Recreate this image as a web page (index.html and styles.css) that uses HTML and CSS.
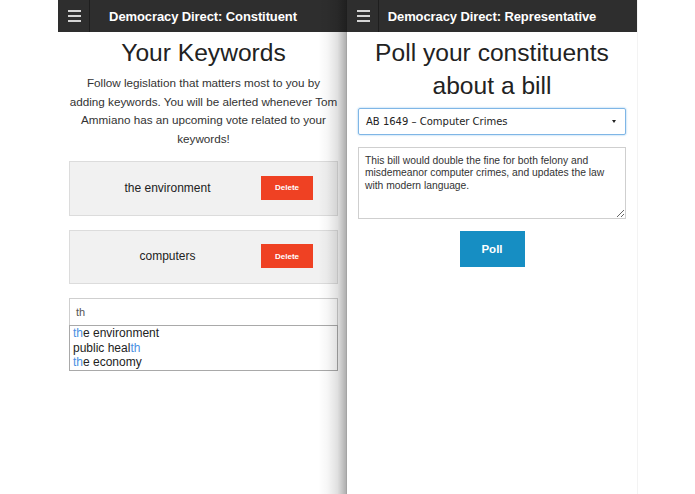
FILE: index.html
```html
<!DOCTYPE html>
<html>
<head>
<meta charset="utf-8">
<link rel="stylesheet" href="styles.css">
</head>
<body>
<div class="stage">
  <section class="panel panel-left">
    <header class="navbar">
      <div class="menu"><span></span><span></span><span></span></div>
      <div class="nav-title">Democracy Direct: Constituent</div>
    </header>
    <div class="content">
      <h1 class="heading">Your Keywords</h1>
      <p class="lead">Follow legislation that matters most to you by<br>adding keywords. You will be alerted whenever Tom<br>Ammiano has an upcoming vote related to your<br>keywords!</p>
      <div class="keyword">
        <span class="keyword-label">the environment</span>
        <button class="btn-delete">Delete</button>
      </div>
      <div class="keyword keyword-2">
        <span class="keyword-label">computers</span>
        <button class="btn-delete">Delete</button>
      </div>
      <div class="search">th</div>
      <ul class="suggest">
        <li><span class="hl">th</span>e environment</li>
        <li>public heal<span class="hl">th</span></li>
        <li><span class="hl">th</span>e economy</li>
      </ul>
    </div>
  </section>
  <section class="panel panel-right">
    <header class="navbar">
      <div class="menu"><span></span><span></span><span></span></div>
      <div class="nav-title">Democracy Direct: Representative</div>
    </header>
    <div class="content">
      <h1 class="heading">Poll your constituents about a bill</h1>
      <div class="select">
        <span>AB 1649 – Computer Crimes</span>
        <span class="caret"></span>
      </div>
      <textarea class="desc" readonly>This bill would double the fine for both felony and misdemeanor computer crimes, and updates the law with modern language.</textarea>
      <div class="actions"><button class="btn-poll">Poll</button></div>
    </div>
  </section>
</div>
</body>
</html>
```

FILE: styles.css
```css
html, body {
  margin: 0;
  padding: 0;
  background: #fff;
  font-family: "Liberation Sans", Arial, Helvetica, sans-serif;
  color: #222;
}

.stage {
  display: flex;
  height: 494px;
  padding-left: 58px;
  overflow: hidden;
}

.panel {
  width: 290px;
  flex: none;
  height: 494px;
  background: #fff;
  display: flex;
  flex-direction: column;
}

.panel-left {
  position: relative;
}

.panel-left::after {
  content: "";
  position: absolute;
  top: 0;
  right: 0;
  width: 30px;
  height: 100%;
  background: linear-gradient(to right,
    rgba(0,0,0,0) 0%,
    rgba(0,0,0,0.03) 30%,
    rgba(0,0,0,0.12) 65%,
    rgba(0,0,0,0.3) 92%,
    rgba(0,0,0,0.45) 100%);
  pointer-events: none;
}

.panel-right {
  margin-left: -1px;
  border-right: 1px solid #f3f3f3;
  position: relative;
  z-index: 1;
}

.navbar {
  height: 32px;
  background: #2e2e2e;
  display: flex;
  align-items: center;
  position: relative;
}

.menu {
  width: 32px;
  height: 32px;
  box-sizing: border-box;
  border-right: 1px solid #1e1e1e;
  display: flex;
  flex-direction: column;
  justify-content: center;
  gap: 3px;
  padding-left: 10px;
}

.menu span {
  display: block;
  width: 13px;
  height: 2px;
  background: #d4d4d4;
}

.nav-title {
  position: absolute;
  left: 0;
  right: 0;
  text-align: center;
  color: #fff;
  font-weight: bold;
  font-size: 13px;
  letter-spacing: -0.1px;
}

.content {
  padding: 4px 10px 0 11px;
  display: flex;
  flex-direction: column;
}

.panel-right .content {
  padding: 4px 11px 0 11px;
}

.heading {
  margin: 0;
  font-size: 24.6px;
  line-height: 33px;
  font-weight: normal;
  text-align: center;
  color: #222;
}

.lead {
  margin: 5px 0 0;
  font-size: 11.7px;
  line-height: 18.5px;
  text-align: center;
  color: #333;
  white-space: nowrap;
}

.keyword {
  margin-top: 13px;
  height: 55px;
  box-sizing: border-box;
  border: 1px solid #dcdcdc;
  background: #f1f1f1;
  display: flex;
  align-items: center;
  padding: 0 24px 2px 4px;
}

.keyword-2 {
  margin-top: 14px;
  height: 54px;
}

.keyword-label {
  flex: 1;
  text-align: center;
  font-size: 12px;
  color: #222;
}

.btn-delete {
  width: 52px;
  height: 24px;
  border: 0;
  background: #ef4123;
  color: #fff;
  font-family: "Liberation Sans", Arial, sans-serif;
  font-size: 8px;
  font-weight: bold;
  padding: 0;
}

.search {
  margin-top: 14px;
  height: 27px;
  box-sizing: border-box;
  border: 1px solid #cfcfcf;
  border-bottom: 0;
  padding: 0 6px;
  font-size: 11px;
  line-height: 27px;
  color: #555;
}

.suggest {
  list-style: none;
  margin: 0;
  padding: 0 0 0 3px;
  border: 1px solid #a9a9a9;
  font-size: 12px;
  line-height: 14.5px;
  color: #222;
}

.hl {
  color: #4a90e2;
}

.select {
  margin-top: 6px;
  height: 27px;
  box-sizing: border-box;
  border: 1px solid #7fb6e6;
  border-radius: 2px;
  box-shadow: 0 0 2px rgba(102, 175, 233, 0.8);
  display: flex;
  align-items: center;
  justify-content: space-between;
  padding: 0 9px 0 7px;
  font-family: "DejaVu Sans", sans-serif;
  font-size: 10px;
  color: #222;
}

.caret {
  width: 0;
  height: 0;
  border-left: 2.5px solid transparent;
  border-right: 2.5px solid transparent;
  border-top: 3px solid #222;
}

.desc {
  margin-top: 12px;
  height: 72px;
  box-sizing: border-box;
  width: 100%;
  border: 1px solid #cfcfcf;
  border-radius: 0;
  padding: 7px 6px 6px;
  font-family: "Liberation Sans", Arial, sans-serif;
  font-size: 10.3px;
  line-height: 12.3px;
  color: #333;
  resize: vertical;
  display: block;
  outline: none;
}

.actions {
  display: flex;
  justify-content: center;
  margin-top: 12px;
}

.btn-poll {
  width: 65px;
  height: 36px;
  border: 0;
  background: #168ec3;
  color: #fff;
  font-family: "Liberation Sans", Arial, sans-serif;
  font-size: 11.5px;
  font-weight: bold;
  padding: 0;
}
```
